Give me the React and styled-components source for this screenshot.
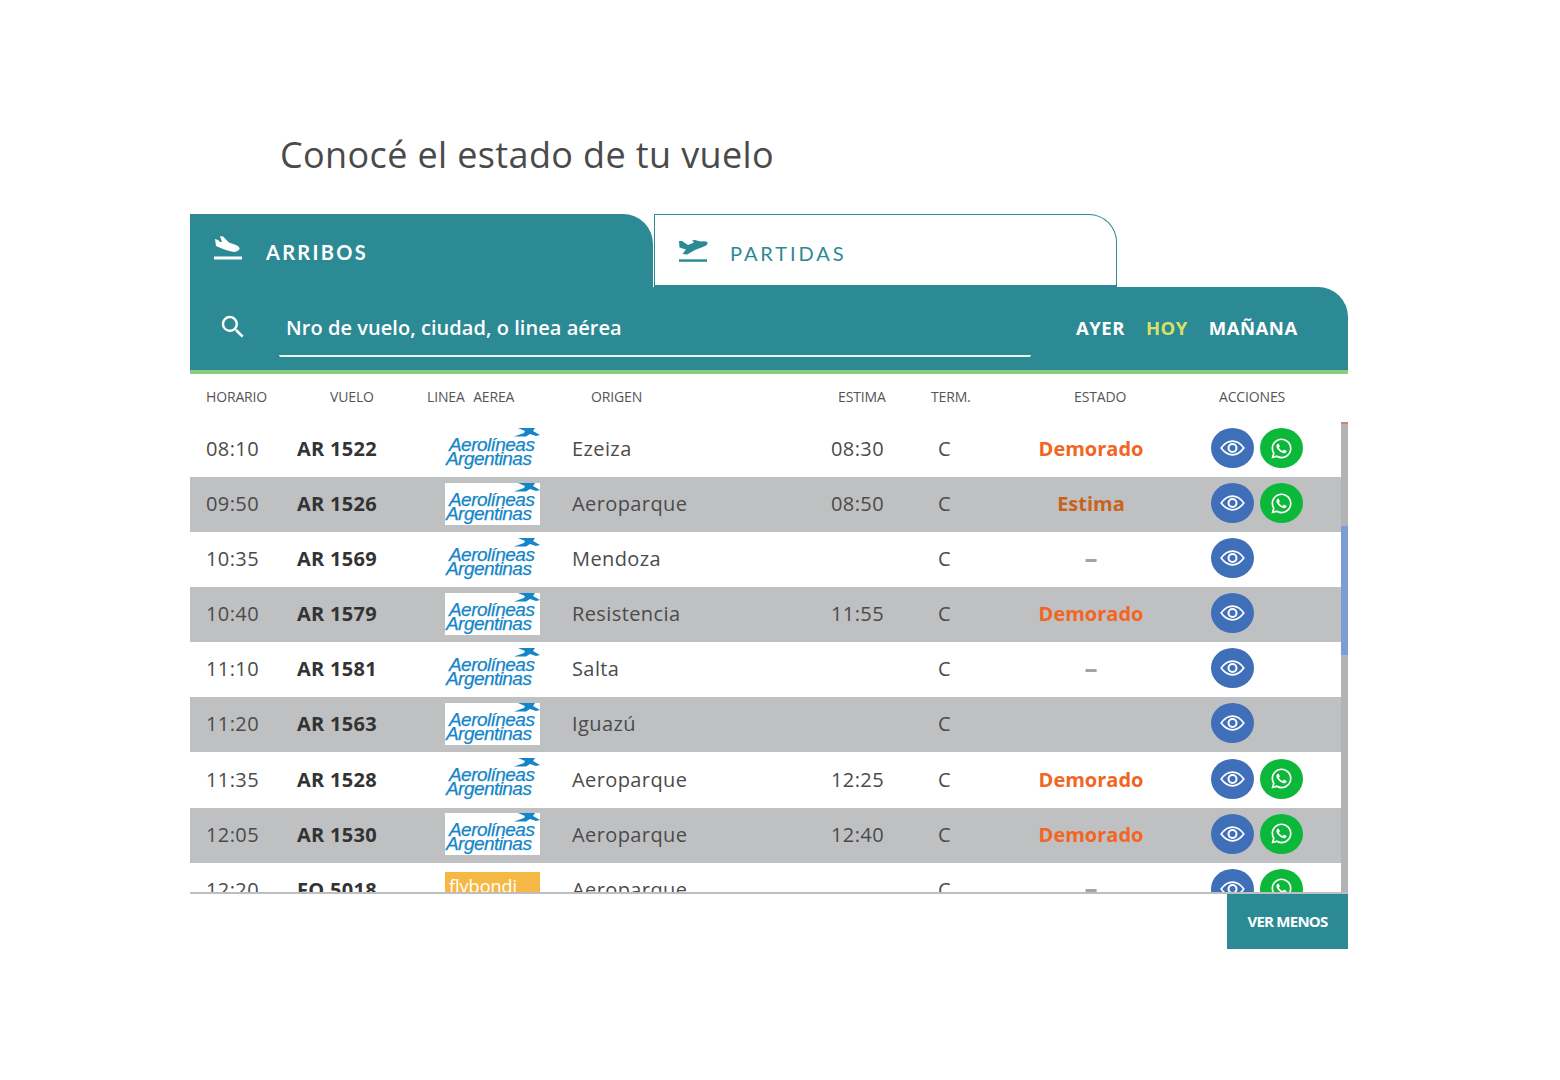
import React from "react";
import styled, { createGlobalStyle } from "styled-components";
import { MdSearch } from "react-icons/md";
import { FaWhatsapp } from "react-icons/fa";

const TEAL = "#2b8a94";

const Global = createGlobalStyle`
  html, body { margin: 0; padding: 0; background: #fff; }
  body { font-family: "Open Sans", "Noto Sans", sans-serif; }
`;

const Page = styled.main`
  width: 1158px;
  margin-left: 190px;
  padding-top: 129px;
`;

const Title = styled.h1`
  margin: 0;
  padding-left: 90px;
  height: 85px;
  font-size: 36px;
  line-height: 51px;
  font-weight: 500;
  color: #4a4a4a;
  letter-spacing: 0.37px;
`;

const Tabs = styled.div`
  display: flex;
  height: 73px;
`;

const Tab = styled.div`
  display: flex;
  align-items: center;
  box-sizing: border-box;
  width: 463px;
  height: 73px;
  font-family: Lato, "Open Sans", sans-serif;
  font-size: 20px;
  ${(p) =>
    p.$active
      ? `background: ${TEAL};
         color: #fff;
         font-weight: 700;
         letter-spacing: 2.3px;
         border-top-right-radius: 30px;
         padding: 3px 0 0 23px;
         gap: 23px;`
      : `margin-left: 1px;
         background: #fff;
         color: ${TEAL};
         letter-spacing: 2.9px;
         border: 1px solid ${TEAL};
         border-bottom: 2px solid ${TEAL};
         border-top-right-radius: 28px;
         padding: 6px 0 0 23px;
         gap: 22px;`}
`;

const TabIcon = styled.svg`
  flex: none;
  width: 30px;
  margin-top: ${(p) => p.$shift}px;
  fill: currentColor;
`;

const Bar = styled.div`
  display: flex;
  align-items: flex-start;
  box-sizing: border-box;
  height: 87px;
  background: ${TEAL};
  border-bottom: 4px solid #8ccb7d;
  border-top-right-radius: 30px;
  padding-left: 28px;
`;

const SearchIcon = styled(MdSearch)`
  width: 30px;
  height: 30px;
  color: #fff;
  margin-top: 25px;
  flex: none;
`;

const SearchField = styled.div`
  box-sizing: border-box;
  width: 752px;
  height: 70px;
  margin-left: 31px;
  padding: 26px 0 0 7px;
  border-bottom: 2px solid #eaf5f5;
  border-radius: 0 0 2px 2px;
  color: #fff;
  font-size: 20px;
  line-height: 30px;
  font-weight: 600;
  letter-spacing: 0.05px;
`;

const Days = styled.div`
  display: flex;
  gap: 21px;
  margin-left: 45px;
  margin-top: 28px;
`;

const Day = styled.span`
  font-size: 18.5px;
  line-height: 26px;
  font-weight: 700;
  letter-spacing: 0.5px;
  font-kerning: none;
  color: ${(p) => (p.$on ? "#d8e06a" : "#fff")};
`;

const HeadRow = styled.div`
  display: grid;
  grid-template-columns: 124px 97px 164px 247px 93px 143px 145px 1fr;
  align-items: center;
  height: 48px;
  padding: 0 0 2px 16px;
  box-sizing: border-box;
`;

const Head = styled.span`
  font-size: 14px;
  line-height: 20px;
  font-weight: 500;
  color: #555;
  letter-spacing: -0.15px;
  word-spacing: 5px;
  white-space: nowrap;
`;

const Scroller = styled.div`
  display: flex;
  height: 472px;
  box-sizing: border-box;
  overflow: hidden;
  border-bottom: 2px solid #bdbec0;
`;

const List = styled.div`
  flex: 1;
  min-width: 0;
`;

const Row = styled.div`
  display: grid;
  grid-template-columns: 91px 148px 127px 259px 107px 40px 226px 1fr;
  align-items: center;
  box-sizing: border-box;
  height: 55.08px;
  padding: 0 0 2px 16px;
  background: ${(p) => (p.$alt ? "#bfc0c2" : "#fff")};
  font-size: 20px;
  color: #4b4b4b;
`;

const Cell = styled.span`
  white-space: nowrap;
  letter-spacing: 0.4px;
`;

const Flight = styled(Cell)`
  font-weight: 700;
  color: #333;
  letter-spacing: 0.3px;
`;

const State = styled.span`
  text-align: center;
  font-weight: 700;
  color: ${(p) => p.$c};
  white-space: nowrap;
  ${(p) => p.$dash && "font-size: 26px; line-height: 20px; margin-top: -2px;"}
`;

const Logo = styled.div`
  position: relative;
  width: 95px;
  height: 42px;
  overflow: hidden;
  background: ${(p) => (p.$fly ? "#f6b844" : "#fff")};
  ${(p) => p.$fly && "margin-top: 8px;"}
`;

const LogoLine = styled.span`
  position: absolute;
  left: ${(p) => p.$x}px;
  top: ${(p) => p.$y}px;
  font-family: "Liberation Sans", sans-serif;
  font-style: italic;
  font-size: 19px;
  line-height: 20px;
  letter-spacing: -0.55px;
  color: #1485c8;
  -webkit-text-stroke: 0.25px #1485c8;
`;

const FlyName = styled.span`
  position: absolute;
  left: 4px;
  top: 3px;
  font-size: 18px;
  line-height: 22px;
  color: #fff;
`;

const Bird = styled.svg`
  position: absolute;
  right: 0;
  top: 0;
  width: 27px;
  height: 9px;
  fill: #1485c8;
`;

const Actions = styled.div`
  display: flex;
  gap: 6px;
  padding-left: 7px;
  margin-top: -1px;
`;

const Round = styled.div`
  display: flex;
  align-items: center;
  justify-content: center;
  width: 43px;
  height: 40px;
  border-radius: 50%;
  background: ${(p) => p.$c};
  color: #fff;
`;

const Track = styled.div`
  flex: none;
  width: 7px;
  background: #b3b3b5;
  border-top: 2px solid #c98a6a;
  box-sizing: border-box;
`;

const Thumb = styled.div`
  height: 129px;
  margin-top: 102px;
  background: #7c9dd2;
`;

const Foot = styled.div`
  display: flex;
  justify-content: flex-end;
`;

const More = styled.button`
  width: 121px;
  height: 55px;
  border: none;
  background: ${TEAL};
  color: #fff;
  font-family: "Open Sans", sans-serif;
  font-size: 15px;
  font-weight: 700;
  letter-spacing: -0.75px;
  padding: 0 0 2px;
`;

const Eye = () => (
  <svg width="25" height="16" viewBox="0 0 25 16" fill="none" stroke="currentColor">
    <path d="M1.2 8C4.5 3.5 8.2 1.2 12.5 1.2S20.5 3.5 23.8 8C20.5 12.5 16.8 14.8 12.5 14.8S4.5 12.5 1.2 8Z" strokeWidth="1.7" />
    <circle cx="12.5" cy="8" r="4" strokeWidth="2" />
  </svg>
);

const ArrivalIcon = () => (
  <TabIcon viewBox="0 0 30 26" height="26" $shift={-8}>
    <path d="M2 4 5 5 7 7 9 7 7 1 10 1.500 16 7.500 23 10Q27 12 26.500 14 26 16 21 17 15 16 10 14L3 11Z" />
    <rect x="1" y="21.500" width="28" height="3" />
  </TabIcon>
);

const DepartIcon = () => (
  <TabIcon viewBox="0 0 30 24" height="24" $shift={-5}>
    <path d="M1 2H4L10 6 16 3.500 14 1.500 17 1 22.500 2.500Q28 1.500 29.500 3.500 30 6 26 7.500L17 11 9 15.500 4.500 15 8 10.500 1.500 8.500Z" />
    <rect x="1" y="20.300" width="28" height="2.500" />
  </TabIcon>
);

const AeroLogo = () => (
  <Logo>
    <Bird viewBox="0 0 27 9">
      <path d="M5 0H22L20 3 27 7 23 8 17 6 13 8.500H1L11 5 12 3Z" />
    </Bird>
    <LogoLine $x={4} $y={7}>Aerolíneas</LogoLine>
    <LogoLine $x={1} $y={21}>Argentinas</LogoLine>
  </Logo>
);

const FlyLogo = () => (
  <Logo $fly>
    <FlyName>flybondi</FlyName>
  </Logo>
);

const DEM = "#f26522";
const GREY = "#a3a3a3";
const rows = [
  ["08:10", "AR 1522", "Ezeiza", "08:30", "Demorado", DEM, true],
  ["09:50", "AR 1526", "Aeroparque", "08:50", "Estima", "#c8631e", true],
  ["10:35", "AR 1569", "Mendoza", "", "–", GREY, false],
  ["10:40", "AR 1579", "Resistencia", "11:55", "Demorado", DEM, false],
  ["11:10", "AR 1581", "Salta", "", "–", GREY, false],
  ["11:20", "AR 1563", "Iguazú", "", "", DEM, false],
  ["11:35", "AR 1528", "Aeroparque", "12:25", "Demorado", DEM, true],
  ["12:05", "AR 1530", "Aeroparque", "12:40", "Demorado", DEM, true],
  ["12:20", "FO 5018", "Aeroparque", "", "–", GREY, true],
];

const heads = ["HORARIO", "VUELO", "LINEA AEREA", "ORIGEN", "ESTIMA", "TERM.", "ESTADO", "ACCIONES"];

export default function App() {
  return (
    <Page>
      <Global />
      <Title>Conocé el estado de tu vuelo</Title>
      <Tabs>
        <Tab $active>
          <ArrivalIcon />
          ARRIBOS
        </Tab>
        <Tab>
          <DepartIcon />
          PARTIDAS
        </Tab>
      </Tabs>
      <Bar>
        <SearchIcon />
        <SearchField>Nro de vuelo, ciudad, o linea aérea</SearchField>
        <Days>
          <Day>AYER</Day>
          <Day $on>HOY</Day>
          <Day>MAÑANA</Day>
        </Days>
      </Bar>
      <HeadRow>
        {heads.map((t) => (
          <Head key={t}>{t}</Head>
        ))}
      </HeadRow>
      <Scroller>
        <List>
          {rows.map((r, i) => (
            <Row key={r[0]} $alt={i % 2 === 1}>
              <Cell>{r[0]}</Cell>
              <Flight>{r[1]}</Flight>
              {i === 8 ? <FlyLogo /> : <AeroLogo />}
              <Cell>{r[2]}</Cell>
              <Cell>{r[3]}</Cell>
              <Cell>C</Cell>
              <State $c={r[5]} $dash={r[4] === "–"}>{r[4]}</State>
              <Actions>
                <Round $c="#3f6fb8"><Eye /></Round>
                {r[6] && <Round $c="#0cb83a"><FaWhatsapp size={23} /></Round>}
              </Actions>
            </Row>
          ))}
        </List>
        <Track><Thumb /></Track>
      </Scroller>
      <Foot>
        <More>VER MENOS</More>
      </Foot>
    </Page>
  );
}
